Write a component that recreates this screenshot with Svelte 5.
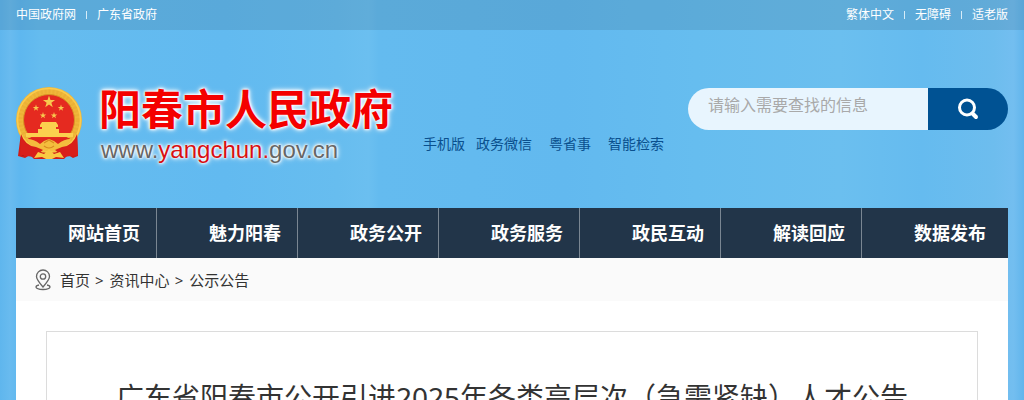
<script>
  const portals = ['中国政府网', '广东省政府'];
  const tools = ['繁体中文', '无障碍', '适老版'];
  const channels = ['手机版', '政务微信', '粤省事', '智能检索'];
  const sections = ['网站首页', '魅力阳春', '政务公开', '政务服务', '政民互动', '解读回应', '数据发布'];
  const star = '0,-10 2.3,-3.1 9.5,-3.1 3.7,1.2 5.9,8.1 0,3.9 -5.9,8.1 -3.7,1.2 -9.5,-3.1 -2.3,-3.1';
  const stars = [
    [33, 15, 0.64],
    [20, 21, 0.34],
    [45, 21, 0.34],
    [27, 28.5, 0.34],
    [38, 28.5, 0.34]
  ];
</script>

<div class="page">
  <div class="topbar">
    <ul class="links">
      {#each portals as name}<li><a href="#top">{name}</a></li>{/each}
    </ul>
    <ul class="links">
      {#each tools as name}<li><a href="#top">{name}</a></li>{/each}
    </ul>
  </div>

  <div class="wrap">
    <header>
      <a class="brand" href="#top">
        <svg class="emblem" viewBox="0 0 66 72" aria-hidden="true">
          <path d="M5 46 L2 69 L9 71 L14 68 L18 72 L48 72 L52 68 L57 71 L62 69 L61 45z" fill="#cf1c18" />
          <path d="M8 53 L7 69 M13 56 L12 67 M53 56 L54 67 M57 52 L58 68" stroke="#8e1216" stroke-width="1.2" />
          <circle cx="33" cy="33" r="33" fill="#f0b73a" />
          <circle cx="33" cy="33" r="29" fill="none" stroke="#dc9a25" stroke-width="5" stroke-dasharray="2 2" opacity=".2" />
          <circle cx="33" cy="33" r="31.5" fill="none" stroke="#fbcb4c" stroke-width="1.6" />
          <circle cx="33" cy="33" r="25.5" fill="#e52a20" stroke="#d79424" />
          {#each stars as [x, y, s]}
            <polygon points={star} transform="translate({x} {y}) scale({s})" fill="#f8c84e" />
          {/each}
          <path d="M24 38 L26 35 H40 L42 38 V40 H40 V42 H43 V46 H57 V50 H10 V46 H22 V42 H26 V40 H24z" fill="#fbd04e" />
          <path d="M12 51 H54 L49 57 H17z" fill="#df261d" />
          <path d="M11 52 Q18 52 24 57 L28 54 L33 52 L38 54 L42 57 Q48 52 55 52 Q51 63 42 61 Q33 66 24 61 Q15 63 11 52z" fill="#f4bd3d" />
          <path d="M28 56 L33 53 L38 56 M28 59 Q33 63 38 59" fill="none" stroke="#d88a20" stroke-width="1.2" />
          <path d="M5 47 Q9 59 20 60 L27 63 L18 70 L4 68z M61 47 Q57 59 46 60 L39 63 L48 70 L62 68z" fill="#d81f1a" />
          <path d="M18 71 L22 65 L28 67 L33 62 L38 67 L44 65 L48 71 L40 70 L36 72 H30 L26 70z" fill="#fac943" />
        </svg>
        <span class="name">
          <strong>阳春市人民政府</strong>
          <span class="domain">www.<em>yangchun.</em>gov.cn</span>
        </span>
      </a>

      <ul class="channels">
        {#each channels as name}<li><a href="#top">{name}</a></li>{/each}
      </ul>

      <form class="search" onsubmit={(e) => e.preventDefault()}>
        <input type="text" aria-label="搜索" placeholder="请输入需要查找的信息" />
        <button type="submit" aria-label="搜索">
          <svg viewBox="0 0 22 22" aria-hidden="true">
            <circle cx="10" cy="9.5" r="7.5" fill="none" stroke="#fff" stroke-width="3" />
            <path d="M15.500 15.500 L19 19" stroke="#fff" stroke-width="4" stroke-linecap="round" />
          </svg>
        </button>
      </form>
    </header>

    <nav>
      {#each sections as name}<a href="#top">{name}</a>{/each}
    </nav>

    <main>
      <div class="crumbs">
        <svg viewBox="0 0 16 22" aria-hidden="true" fill="none" stroke="#666" stroke-width="1.3">
          <path d="M8 18 Q1.500 10.500 1.500 7.500 A6.500 6.500 0 0 1 14.500 7.500 Q14.500 10.500 8 18z" />
          <circle cx="8" cy="7.500" r="2.700" />
          <path d="M4 16 Q1 16.500 1 18.200 Q1.500 20.500 8 20.500 Q14.500 20.500 15 18.200 Q15 16.500 12 16" />
        </svg>
        <a href="#top">首页</a><span>&gt;</span><a href="#top">资讯中心</a><span>&gt;</span><a href="#top">公示公告</a>
      </div>
      <article>
        <h1>广东省阳春市公开引进2025年各类高层次（急需紧缺）人才公告</h1>
      </article>
    </main>
  </div>
</div>

<style>
  :global(body) {
    margin: 0;
  }
  .page {
    font-family: 'Noto Sans', 'Noto Sans CJK SC', sans-serif;
    color: #333;
    background: linear-gradient(
      90deg,
      #5fb6ed 0%,
      #69bbef 1%,
      #5eb7ef 2%,
      #65bcef 4%,
      #62baf0 22%,
      #67bdef 33%,
      #6bbff0 36%,
      #64bbef 37%,
      #62b9ef 55%,
      #66bdef 68%,
      #6bbfef 82%,
      #65bbef 90%,
      #6dbdee 97%,
      #73bef0 99%,
      #61b5ec 100%
    );
  }
  a {
    color: inherit;
    text-decoration: none;
  }
  ul {
    display: flex;
    margin: 0;
    padding: 0;
    list-style: none;
  }
  .topbar {
    display: flex;
    justify-content: space-between;
    height: 30px;
    padding: 0 16px;
    background: rgba(60, 110, 140, 0.22);
    color: #fff;
    font-size: 12px;
    line-height: 30px;
  }
  .links li {
    display: flex;
    align-items: center;
  }
  .links li + li::before {
    content: '';
    width: 1px;
    height: 8px;
    margin: 0 10px;
    background: #d6ecf8;
  }
  .wrap {
    padding: 0 16px;
  }
  header {
    display: flex;
    align-items: flex-start;
    padding: 57px 0 44px;
  }
  .brand {
    display: flex;
    gap: 17px;
  }
  .emblem {
    width: 66px;
    height: 72px;
  }
  .name {
    display: flex;
    flex-direction: column;
    gap: 5px;
    text-shadow: 0 0 2px #fff, 0 0 3px #fff, 0 0 4px #fff, 0 0 6px #fff;
  }
  .name strong {
    color: #f40000;
    font-size: 42px;
    line-height: 44px;
    font-weight: 700;
  }
  .domain {
    padding-left: 2px;
    color: #666;
    font: 24px/28px 'Liberation Sans', sans-serif;
  }
  .domain em {
    color: #d80f12;
    font-style: normal;
  }
  .channels {
    gap: 17px;
    margin: 46px 0 0 30px;
    color: #0a508e;
    font-size: 14px;
    line-height: 22px;
  }
  .channels li:first-child {
    margin-right: -6px;
  }
  .search {
    display: flex;
    width: 320px;
    height: 42px;
    margin: 1px 0 0 auto;
    border-radius: 21px;
    overflow: hidden;
  }
  .search input {
    flex: 1;
    min-width: 0;
    box-sizing: border-box;
    padding: 0 20px 8px;
    border: 0;
    background: #e8f5fe;
    color: #333;
    font: inherit;
    font-size: 16px;
  }
  .search input::placeholder {
    color: #a9a9a9;
  }
  .search button {
    display: grid;
    place-items: center;
    width: 80px;
    padding: 0;
    border: 0;
    background: #005293;
  }
  .search svg {
    width: 22px;
    height: 22px;
  }
  nav {
    display: flex;
    padding-right: 5px;
    background: #223549;
    color: #fff;
    font-size: 18px;
    font-weight: 700;
    line-height: 50px;
  }
  nav a {
    flex: 1 1 0;
    box-sizing: border-box;
    padding-left: 52px;
    border-right: 1px solid #7a8692;
    white-space: nowrap;
  }
  nav a:last-child {
    border-color: transparent;
  }
  main {
    padding-bottom: 30px;
    background: #fff;
  }
  .crumbs {
    display: flex;
    align-items: center;
    height: 43px;
    padding-left: 19px;
    background: #fafafa;
    font-size: 15px;
  }
  .crumbs svg {
    width: 16px;
    height: 22px;
    margin-right: 9px;
  }
  .crumbs span {
    margin: 0 6px 0 5px;
  }
  article {
    margin: 30px 30px 0;
    padding: 42px 30px;
    border: 1px solid #dcdcdc;
  }
  h1 {
    margin: 0;
    font-size: 28px;
    line-height: 46px;
    font-weight: 400;
    text-align: center;
  }
</style>
